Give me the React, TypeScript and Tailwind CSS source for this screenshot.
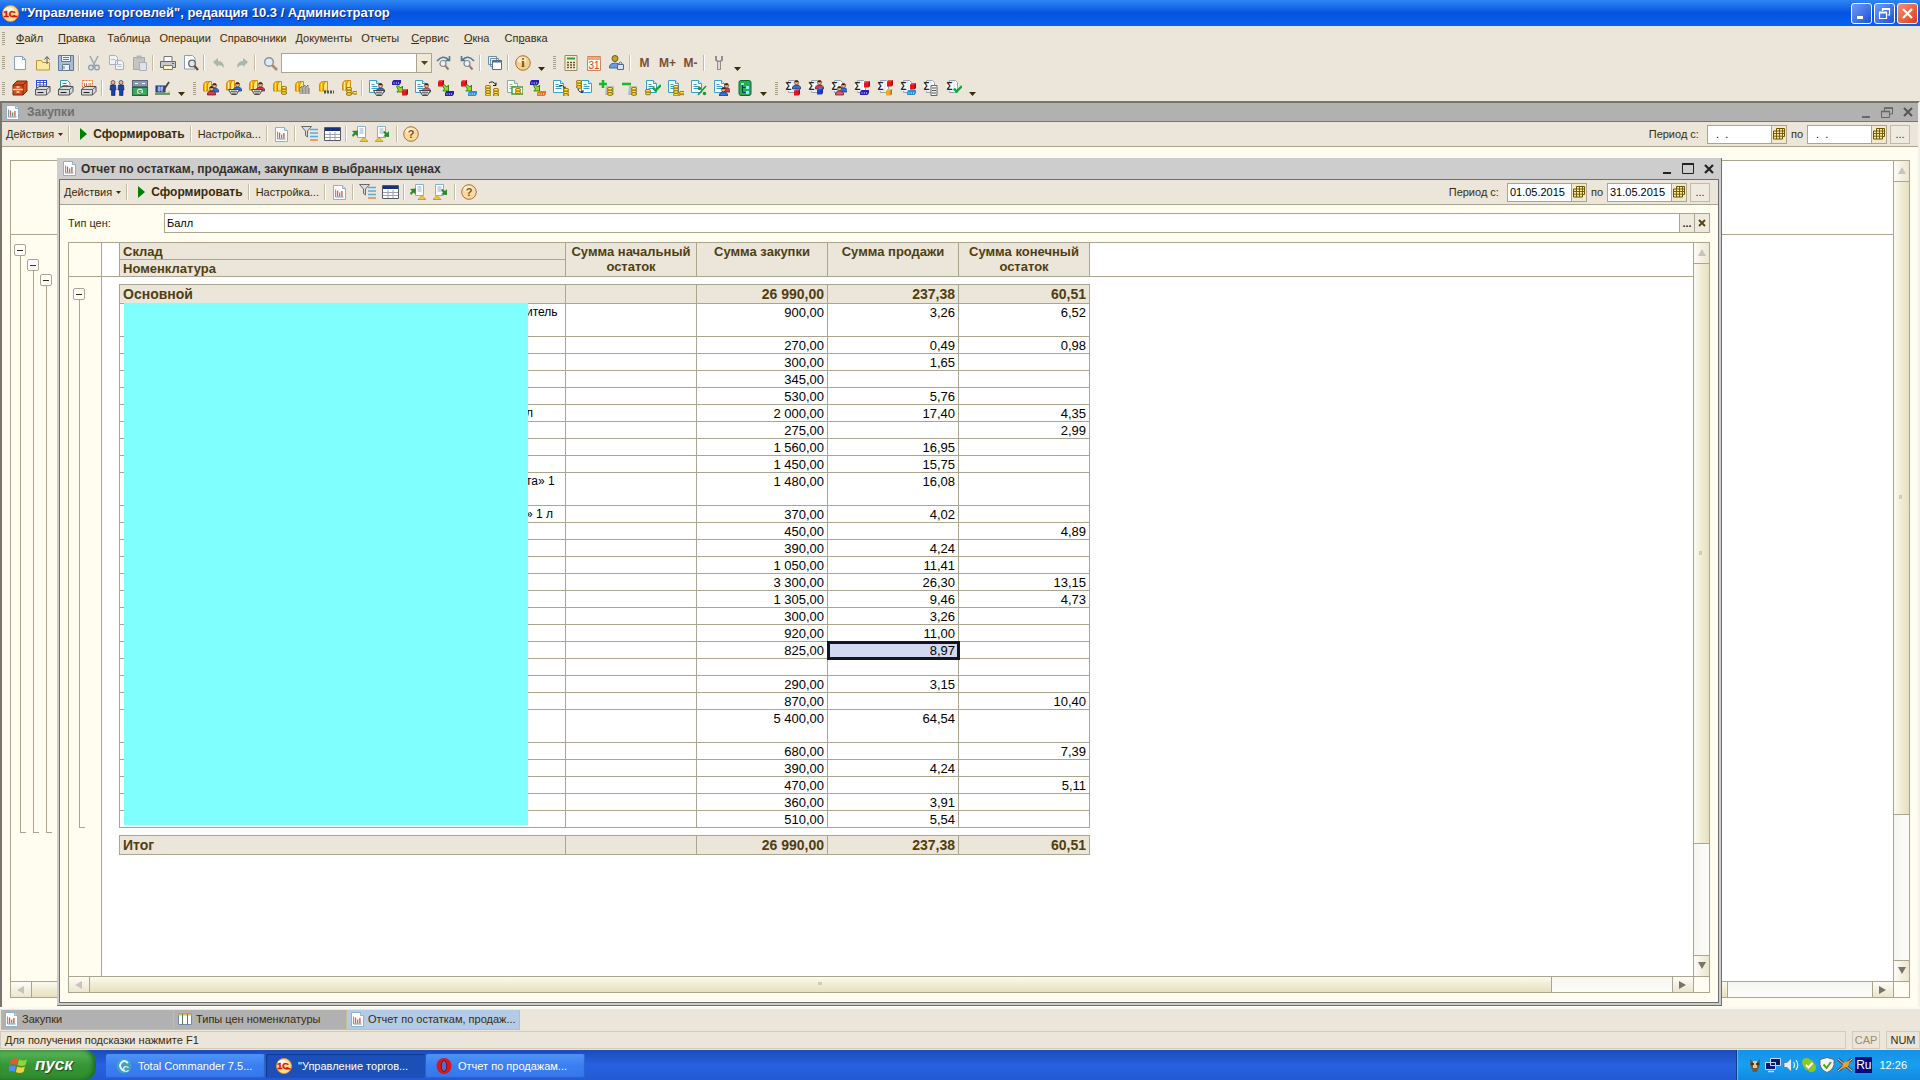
import type { ReactNode } from 'react'

const SHEET_FONT = "font-['Liberation_Sans',Arial,sans-serif]"

/* ── ICON PARTS ── */
type Part = { x?: number; y?: number; c?: string }
const at = (x = 0, y = 0) => `translate(${x} ${y})`

function Svg({ children, w = 16, h = 16 }: { children: ReactNode; w?: number; h?: number }) {
  return (
    <svg width={w} height={h} viewBox={`0 0 ${w} ${h}`} className="shrink-0" aria-hidden="true">
      {children}
    </svg>
  )
}

function Doc({ x, y, c = '#3aa0cc' }: Part) {
  return (
    <g transform={at(x, y)}>
      <path d="M.5.5h7l3 3v9h-10z" fill="#fff" stroke={c} />
      <path d="M7.5.5v3h3" fill="#dff0fa" stroke={c} />
      <path d="M2.500 4.500h3M2.500 6.500h6M2.500 8.500h6" stroke={c} />
    </g>
  )
}

function Coins({ x, y, n = 3 }: Part & { n?: number }) {
  return (
    <g transform={at(x, y)}>
      {Array.from({ length: n }, (_, i) => (
        <g key={i}>
          <rect x=".5" y={(n - 1 - i) * 2.6 + 0.5} width="5" height="2.6" rx="1.2" fill="#f8d020" stroke="#8a6400" strokeWidth=".9" />
          <path d={`M2 ${(n - 1 - i) * 2.6 + 1.4}h2`} stroke="#fff39a" strokeWidth=".8" />
        </g>
      ))}
    </g>
  )
}

function Person({ x, y, c = '#2f6fe0' }: Part) {
  return (
    <g transform={at(x, y)}>
      <path d="M.5 9V7l2-2h4l2 2v2z" fill={c} stroke="#20285a" strokeWidth=".7" />
      <circle cx="4.500" cy="2.600" r="2.100" fill="#f6b98a" stroke="#5a2a10" strokeWidth=".6" />
      <path d="M2.500 2.200a2 2 0 0 1 4 0z" fill="#4a2410" />
    </g>
  )
}

function Basket({ x, y }: Part) {
  return (
    <g transform={at(x, y)}>
      <path d="M.5.500h11l-3 5h-5z" fill="#fff" stroke="#333" strokeWidth=".9" />
      <path d="M2.500 2.500h7M4 4.300h4M4 .5v4M6 .5v5M8 .5v4" stroke="#555" strokeWidth=".7" />
    </g>
  )
}

function Cube({ x, y, c = '#e8141c' }: Part) {
  return (
    <g transform={at(x, y)}>
      <path d="M0 1.500L1.500 0H6v5L4.500 6.500H0z" fill={c} />
      <path d="M4.500 1.500V6.500L6 5V0z" fill="#000" opacity=".3" />
      <path d="M0 1.500L1.500 0H6L4.500 1.500z" fill="#fff" opacity=".25" />
    </g>
  )
}

function Shelf({ x, y, c = '#2a1fb8' }: Part) {
  return (
    <g transform={at(x, y)}>
      <path d="M0 2L1.500 0H9v3L7.500 5H0z" fill={c} />
      <path d="M1.500 3h1M3.800 3h1M6 3h1" stroke="#fff" strokeWidth="1.100" />
    </g>
  )
}

function GreenArrow({ x, y }: Part) {
  return <path transform={at(x, y)} d="M.5 1.500l1.500-1 3 2.500L6.500 1v6H.8l1.700-1.800z" fill="#8fdc20" stroke="#2b6a08" strokeWidth=".8" />
}

function Gold({ x, y }: Part) {
  return (
    <g transform={at(x, y)}>
      <path d="M.5 10V5q0-4.500 4-4.500h3q-3 1-3 4.500v5z" fill="#ffb400" stroke="#d08000" strokeWidth=".9" />
      <path d="M4.500 10V5q0-3.500 2.500-4.500h1.500V10z" fill="#ffe678" stroke="#d08000" strokeWidth=".9" />
      <path d="M2.500 2v8" stroke="#fff0a0" strokeWidth=".9" />
    </g>
  )
}

function Sheet({ x, y }: Part) {
  return (
    <g transform={at(x, y)}>
      <path d="M3.500.5h6l2 2v10h-8z" fill="#fff" stroke="#9aa4ae" />
      <rect x="0" y="2" width="8" height="9" fill="#fff" stroke="#c4c8cc" strokeWidth=".6" />
      <text x=".6" y="10.200" fontSize="10" fontWeight="700" fill="#222" fontFamily="Liberation Sans">Σ</text>
    </g>
  )
}

const Tick = ({ x, y }: Part) => (
  <path transform={at(x, y)} d="M1 3.500l2.500 3L9 1" fill="none" stroke="#12a53a" strokeWidth="2.400" />
)

const Printer = ({ x, y }: Part) => (
  <g transform={at(x, y)}>
    <path d="M.5 4.500L4 1.500h11v5l-3.500 3.500H.5z" fill="#d8dade" stroke="#444" strokeWidth=".9" />
    <path d="M.5 4.500h11L15 1.500M11.500 4.500V10" fill="none" stroke="#444" strokeWidth=".8" />
    <path d="M2.500 7.500h6" stroke="#222" />
  </g>
)

const ReportIcon = () => (
  <Svg w={13} h={15}>
    <path d="M.5.5h9l3 3v11h-12z" fill="#fff" stroke="#8fb0cc" />
    <path d="M9.500.5v3h3" fill="#cfe0f0" stroke="#8fb0cc" />
    <path d="M2.500 4.500v7.500h8" fill="none" stroke="#7a9aba" />
    <path d="M4.500 5.500v6" stroke="#d85a4a" strokeWidth="1.400" />
    <path d="M6.700 7.500v4" stroke="#4a9a5a" strokeWidth="1.200" />
    <path d="M8.900 6v5.500" stroke="#d85a4a" strokeWidth="1.400" />
  </Svg>
)

const CalendarGrid = () => (
  <Svg w={12} h={12}>
    <path d="M3.500.5h8v8h-2v2.500h-9V3h3z" fill="#f7e9a0" stroke="#6b5200" />
    <path d="M.5 5.500h11M.5 8.200h9M3.500 3v8M6.500.5v10.500M9.500.5v8M3.500 3h8" stroke="#6b5200" strokeWidth=".9" />
  </Svg>
)

const Logo1C = ({ size = 17 }: { size?: number }) => (
  <svg width={size} height={size} viewBox="0 0 17 17" className="shrink-0" aria-hidden="true">
    <circle cx="8.500" cy="8.500" r="8" fill="#fde08a" stroke="#f08a3a" />
    <ellipse cx="7" cy="5" rx="5" ry="3" fill="#fffbe8" />
    <text x="1.400" y="12" fontSize="9.500" fontWeight="700" fill="#d8140c" stroke="#d8140c" strokeWidth=".4" fontFamily="Liberation Sans">1С</text>
    <path d="M10 11.500h5.500" stroke="#d8140c" strokeWidth="1.600" />
  </svg>
)

/* ── SMALL CONTROLS ── */
const Grip = () => (
  <span className="mx-[2px] flex w-1 shrink-0 flex-col gap-px">
    {[0, 1, 2, 3, 4, 5, 6].map(i => <span key={i} className="h-px w-[3px] bg-[#a79f8a]" />)}
  </span>
)

const Sep = () => <span className="mr-[2px] ml-px h-4 w-[2px] shrink-0 border-l border-[#c3baa4] bg-white" />

const More = () => (
  <button aria-label="Еще" className="mr-1 ml-px flex h-4 w-3 shrink-0 items-end justify-center">
    <Svg w={7} h={4}><path d="M0 0h7L3.500 4z" fill="#3a2c08" /></Svg>
  </button>
)

function Tool({ label, children }: { label: string; children: ReactNode }) {
  return (
    <button aria-label={label} title={label} className="flex h-5 w-[23px] shrink-0 items-center justify-center">
      {children}
    </button>
  )
}

/* ── DATA ── */
const menu = [
  ['', 'Ф', 'айл'], ['', 'П', 'равка'], ['', '', 'Таблица'], ['', '', 'Операции'], ['', '', 'Справочники'],
  ['', '', 'Документы'], ['', '', 'Отчеты'], ['', 'С', 'ервис'], ['', 'О', 'кна'], ['Сп', 'р', 'авка'],
]

const printing: [string, ReactNode][] = [
  ['Картотека', <g key="i"><path d="M1 5l4-4h10v10l-4 4H1z" fill="#d4501c" stroke="#7a2408" /><path d="M1 5h10v10M11 5l4-4" fill="none" stroke="#7a2408" /><path d="M1 9.500h10M4.500 7h3M4.500 12h3" stroke="#fbd9b0" strokeWidth="1.300" /></g>],
  ['Печать реестра', <g key="i"><rect x="1.500" y=".5" width="10" height="7" fill="#fff" stroke="#2a4fd0" /><path d="M1.500 2.500h10M1.500 5h10M5 .5v7M8.500 .5v7" stroke="#2a4fd0" strokeWidth=".9" /><Printer y={5} /></g>],
  ['Печать документа', <g key="i"><path d="M2.500.5h7l2.500 2.500v4h-9.500z" fill="#fff" stroke="#2aa0a8" /><path d="M4.500 3.500h4M4.500 5.500h6" stroke="#2aa0a8" /><Printer y={5} /></g>],
  ['Печать ценников', <g key="i"><rect x="1.500" y=".5" width="10" height="7" fill="#fff" stroke="#f07020" strokeDasharray="2 1" /><path d="M3.500 3v3M5.500 3v3M8 3v3M9.800 3v3" stroke="#f07020" /><Printer y={5} /></g>],
]

const partners: [string, ReactNode][] = [
  ['Контрагенты', <g key="i" fill="#1c3fa8" stroke="#0a1a60" strokeWidth=".6"><circle cx="4" cy="2.500" r="2" fill="#f2b080" /><path d="M1.500 5h5l.5 5H6v5.500H2.500V10H1z" /><circle cx="12" cy="2.500" r="2" fill="#f2b080" /><path d="M9.500 5h5l.5 5h-1v5.500h-3.500V10H9z" /></g>],
  ['Касса', <g key="i"><rect x=".5" y=".5" width="15" height="6" fill="#8a98b0" stroke="#5a6478" /><path d="M3 3.500h3M10 3.500h3" stroke="#fff" /><rect x=".5" y="7.500" width="15" height="8" fill="#3aa860" stroke="#1a6a38" /><circle cx="8" cy="11.500" r="3" fill="#d8f4d8" /><text x="5.800" y="14.500" fontSize="8" fill="#1a6a38" fontFamily="Liberation Sans">$</text></g>],
  ['Учетная запись', <g key="i"><rect x="1" y="6" width="9" height="6" fill="#3a60c0" stroke="#1a2a60" /><path d="M3 8h5M3 10h5M4 6v6M7 6v6" stroke="#cfe0ff" strokeWidth=".8" /><path d="M0 14h15" stroke="#3a8a2a" strokeWidth="1.500" /><path d="M8 11l6-9" stroke="#444" strokeWidth="1.800" /><path d="M11 13l4-2v2z" fill="#b8c070" /></g>],
]

const sales: [string, ReactNode][] = [
  ['Клиенты', <g key="i"><Gold y={1} /><Person x={7} y={3} /><Person x={4} y={6} c="#e8343c" /></g>],
  ['Заказы покупателей', <g key="i"><Gold /><Person x={7} y={2} /><Basket x={2} y={9} /></g>],
  ['Заказы поставщикам', <g key="i"><Gold /><Person x={7} y={2} c="#e8343c" /><Basket x={2} y={9} /></g>],
  ['Цены', <g key="i"><Gold x={1} y={1} /><Coins x={9} y={6} /></g>],
  ['Остатки', <g key="i"><Gold y={1} /><path d="M5 14V8l2-2v8M8 14V7l2-2v9M11 14V7l2-2v9M14 14V8" fill="#e8e8ea" stroke="#777" /></g>],
  ['Склад', <g key="i"><Gold x={1} y={1} /><path d="M6 12h10" stroke="#555" strokeWidth="3" strokeDasharray="2 1" /></g>],
  ['Оплата', <g key="i"><Gold x={1} /><Coins x={5} y={7} /><Coins x={11} y={11} n={1} /></g>],
]

const docs: [string, ReactNode][] = [
  ['Заказ покупателя', <g key="i"><Doc /><Person x={7} y={3} /><Basket x={4} y={10} /></g>],
  ['Реализация', <g key="i"><Shelf /><GreenArrow x={4} y={5} /><Cube x={10} y={9} /></g>],
  ['Заказ поставщику', <g key="i"><Doc /><Person x={7} y={3} c="#f06068" /><Basket x={4} y={10} /></g>],
  ['Поступление', <g key="i"><Cube /><GreenArrow x={4} y={4} /><Shelf x={7} y={11} /></g>],
  ['Перемещение', <g key="i"><Cube /><GreenArrow x={4} y={4} /><Shelf x={7} y={11} c="#2a90e0" /></g>],
  ['Перемещение денег', <g key="i"><Coins x={1} y={5} n={4} /><Coins x={9} y={8} /><path d="M5 3q4-3 7 2M12 5.500V2.500M12 5.500H9" fill="none" stroke="#222" /></g>],
  ['Приходный ордер', <g key="i"><Doc c="#8ab098" /><rect x="5" y="7" width="11" height="7" fill="#fff" stroke="#3a9a2a" strokeWidth="1.400" /><Coins x={8} y={8} n={2} /></g>],
  ['Расход со склада', <g key="i"><Shelf /><GreenArrow x={3} y={4} /><Shelf x={7} y={11} c="#e07828" /></g>],
  ['Платежное поручение', <g key="i"><Doc /><path d="M6 6q4-2 6 3M12 9.500V6.500" fill="none" stroke="#222" /><Coins x={10} y={8} /></g>],
  ['Входящий платеж', <g key="i"><Doc x={5} /><Coins x={0} y={0} /><path d="M2 9q1 4 5 3M7 12H5M7 12V10" fill="none" stroke="#222" /></g>],
  ['Приход денег', <g key="i"><path d="M7 6h8v9H6z" fill="#b8bcc0" /><path d="M4 0v8M0 4h8" stroke="#18b828" strokeWidth="2.600" /><Coins x={8} y={7} /></g>],
  ['Расход денег', <g key="i"><path d="M7 6h8v9H6z" fill="#b8bcc0" /><path d="M0 4h9" stroke="#18b828" strokeWidth="2.600" /><Coins x={9} y={7} /></g>],
  ['Проверка', <g key="i"><Doc x={1} /><Tick x={7} y={4} /><Coins x={0} y={9} n={2} /></g>],
  ['Счет', <g key="i"><Doc /><Coins x={5} y={5} n={4} /><Coins x={11} y={11} n={2} /></g>],
  ['Скидки', <g key="i"><Doc /><path d="M7 15l8-9" stroke="#18963a" strokeWidth="1.500" /><circle cx="8.500" cy="8.500" r="1.700" fill="#18963a" /><circle cx="13.500" cy="13.500" r="1.700" fill="#18963a" /></g>],
  ['Взаиморасчеты', <g key="i"><Doc /><Person x={8} y={3} c="#e8343c" /><Person x={5} y={7} /></g>],
  ['Структура', <g key="i"><rect x="2" y=".5" width="12" height="15" rx="2" fill="#22b050" stroke="#0c6a2c" /><path d="M5.500 4v8.500h3M5.500 7.500h3" fill="none" stroke="#0a3a60" /><path d="M9 6h3v3H9zM9 11h3v3H9zM4 3h3v2H4z" fill="#9fe0ff" /></g>],
]

const reports: [string, ReactNode][] = [
  ['Продажи', <g key="i"><Sheet /><Person x={7} y={0} /><Cube x={9} y={9} /></g>],
  ['Закупки', <g key="i"><Sheet /><Person x={7} y={0} c="#e8343c" /><Cube x={9} y={8} c="#1c3fd0" /></g>],
  ['Взаиморасчеты', <g key="i"><Sheet /><Person x={8} y={3} /><Person x={4} y={6} c="#f05058" /></g>],
  ['Товары на складах', <g key="i"><Sheet /><Cube x={10} y={1} /><Shelf x={6} y={10} /></g>],
  ['Товары в рознице', <g key="i"><Sheet /><Cube x={10} y={0} /><Cube x={9} y={9} c="#f0a820" /></g>],
  ['Товары в резерве', <g key="i"><Sheet /><Cube x={10} y={3} /><Shelf x={7} y={10} c="#2a90e0" /></g>],
  ['Ведомость', <g key="i"><Sheet /><path d="M8 5.500h6v10H8z" fill="#f4f4f4" stroke="#666" /><path d="M9 8h4M9 10.500h4M9 13h4" stroke="#555" /></g>],
  ['Анализ', <g key="i"><Sheet /><Tick x={7} y={5} /></g>],
]

type Row = { name?: string; buy?: string; sell?: string; end?: string; tall?: boolean; active?: boolean }
const rows: Row[] = [
  { name: 'итель', buy: '900,00', sell: '3,26', end: '6,52', tall: true },
  { buy: '270,00', sell: '0,49', end: '0,98' },
  { buy: '300,00', sell: '1,65' },
  { buy: '345,00' },
  { buy: '530,00', sell: '5,76' },
  { name: 'л', buy: '2 000,00', sell: '17,40', end: '4,35' },
  { buy: '275,00', end: '2,99' },
  { buy: '1 560,00', sell: '16,95' },
  { buy: '1 450,00', sell: '15,75' },
  { name: 'та» 1', buy: '1 480,00', sell: '16,08', tall: true },
  { name: '» 1 л', buy: '370,00', sell: '4,02' },
  { buy: '450,00', end: '4,89' },
  { buy: '390,00', sell: '4,24' },
  { buy: '1 050,00', sell: '11,41' },
  { buy: '3 300,00', sell: '26,30', end: '13,15' },
  { buy: '1 305,00', sell: '9,46', end: '4,73' },
  { buy: '300,00', sell: '3,26' },
  { buy: '920,00', sell: '11,00' },
  { buy: '825,00', sell: '8,97', active: true },
  {},
  { buy: '290,00', sell: '3,15' },
  { buy: '870,00', end: '10,40' },
  { buy: '5 400,00', sell: '64,54', tall: true },
  { buy: '680,00', end: '7,39' },
  { buy: '390,00', sell: '4,24' },
  { buy: '470,00', end: '5,11' },
  { buy: '360,00', sell: '3,91' },
  { buy: '510,00', sell: '5,54' },
]

/* ── SCROLLBARS ── */
const arrows: Record<string, string> = {
  up: 'M4 0l4 7H0z', down: 'M0 0h8L4 7z', left: 'M7 0v8L0 4z', right: 'M0 0l7 4-7 4z',
}

function ScrollButton({ dir, dim }: { dir: string; dim?: boolean }) {
  const vertical = dir === 'up' || dir === 'down'
  return (
    <button
      aria-label={dir}
      className={`flex shrink-0 items-center justify-center border-[#aaa58e] ${vertical
        ? 'h-[21px] w-[15px] bg-linear-to-r from-[#fdfcf6] to-[#ebe6cf]'
        : 'h-[15px] w-[21px] bg-linear-to-b from-[#fdfcf6] to-[#ebe6cf]'} ${dir === 'up' ? 'border-b' : ''} ${dir === 'down' ? 'border-t' : ''} ${dir === 'left' ? 'border-r' : ''} ${dir === 'right' ? 'border-l' : ''}`}
    >
      <Svg w={8} h={8}><path d={arrows[dir]} fill={dim ? '#c6c4bb' : '#77746a'} /></Svg>
    </button>
  )
}

function VScroll({ size }: { size: number }) {
  return (
    <div className="flex w-4 shrink-0 flex-col border-l border-[#aaa58e]">
      <ScrollButton dir="up" dim />
      <div className="min-h-0 flex-1 bg-linear-to-r from-[#f6f5f0] to-[#fcfcfa]">
        <div
          className="flex items-center justify-center border-b border-[#aaa58e] bg-linear-to-r from-[#fbfaf1] via-[#f0ecd4] to-[#e6e0bf]"
          style={{ height: `${size}%` }}
        >
          <Svg w={5} h={5}><path d="M0 1h3M0 3h3" stroke="#b3ab88" /></Svg>
        </div>
      </div>
      <ScrollButton dir="down" />
    </div>
  )
}

function HScroll({ size }: { size: number }) {
  return (
    <div className="flex h-4 shrink-0 border-t border-[#aaa58e]">
      <ScrollButton dir="left" dim />
      <div className="min-w-0 flex-1 bg-linear-to-b from-[#f6f5f0] to-[#fcfcfa]">
        <div
          className="flex h-full items-center justify-center border-r border-[#aaa58e] bg-linear-to-b from-[#fbfaf1] via-[#f0ecd4] to-[#e6e0bf]"
          style={{ width: `${size}%` }}
        >
          <Svg w={5} h={5}><path d="M1 0v3M3 0v3" stroke="#b3ab88" /></Svg>
        </div>
      </div>
      <ScrollButton dir="right" />
      <span className="w-4 shrink-0 border-l border-[#aaa58e] bg-[#fffdf3]" />
    </div>
  )
}

/* ── REPORT COMMAND BAR ── */
function DateField({ id, value }: { id: string; value: string }) {
  return (
    <span className="flex h-[19px] border border-[#aaa58e]">
      <input id={id} defaultValue={value} className="w-[63px] bg-white px-[2px] text-black outline-none" />
      <button aria-label="Календарь" className="flex w-[15px] items-center justify-center border-l border-[#aaa58e] bg-[#efe9d4]">
        <CalendarGrid />
      </button>
    </span>
  )
}

function CommandBar({ id, from, to }: { id: string; from: string; to: string }) {
  return (
    <div className="flex h-[25px] shrink-0 items-center border-b border-[#aaa58e] bg-[#ebe5da] pr-2 pl-1">
      <button className="flex h-5 items-center gap-1 pr-1">
        Действия
        <Svg w={5} h={3}><path d="M0 0h5L2.500 3z" fill="#3a2c08" /></Svg>
      </button>
      <Sep />
      <button className="ml-2 flex h-5 items-center gap-[6px] pr-1 text-[12px] font-bold">
        <Svg w={7} h={12}><path d="M0 0l7 6-7 6z" fill="#008000" /></Svg>
        Сформировать
      </button>
      <Sep />
      <button className="h-5 px-1">Настройка...</button>
      <Sep />
      <Tool label="Новый отчет"><ReportIcon /></Tool>
      <Sep />
      <Tool label="Отбор">
        <Svg w={17}>
          <path d="M.5.5h10L6.500 5v6l-2-1.500V5z" fill="#d8dce0" stroke="#6a6a6a" />
          <path d="M9 3.500h8M9 7h8M9 10.500h8" stroke="#5aaad8" strokeWidth="1.600" />
          <path d="M9 14h8" stroke="#e88a4a" strokeWidth="1.600" />
        </Svg>
      </Tool>
      <Tool label="Таблица">
        <Svg w={17}>
          <path d="M.5 1.500h16v13H.5z" fill="#fff" stroke="#555a66" />
          <path d="M1 3.500h15" stroke="#1c2f7a" strokeWidth="3" />
          <path d="M1 8.500h15M1 11.500h15M6 6v8M11 6v8" stroke="#9aa0ac" />
        </Svg>
      </Tool>
      <Sep />
      <Tool label="Загрузить">
        <Svg>
          <path d="M5.500.5h8v11h-8z" fill="#fff" stroke="#8ab0c8" />
          <path d="M7.500 3h4M7.500 5h4M7.500 7h4" stroke="#8ab0c8" />
          <path d="M8 15.500l4-4 4 4z" fill="#f0c838" stroke="#b08a10" strokeWidth=".7" />
          <path d="M0 5l6-.5-.5 6-2-2L1 11l-1-2 2-2z" fill="#2a8a28" />
        </Svg>
      </Tool>
      <Tool label="Сохранить">
        <Svg>
          <path d="M2.500.5h8v11h-8z" fill="#fff" stroke="#8ab0c8" />
          <path d="M4.500 3h4M4.500 5h4M4.500 7h4" stroke="#8ab0c8" />
          <path d="M0 15.500l4-4 4 4z" fill="#f0c838" stroke="#b08a10" strokeWidth=".7" />
          <path d="M14 11l-6-.500 2-2-2-2.500 1.500-1 2.500 2 2-2z" fill="#2a8a28" />
        </Svg>
      </Tool>
      <Sep />
      <Tool label="Справка">
        <Svg>
          <circle cx="8" cy="8" r="7.300" fill="#fbd9a0" stroke="#a8743a" />
          <ellipse cx="7" cy="5" rx="4.500" ry="3" fill="#fff3d8" opacity=".8" />
          <text x="4.800" y="12" fontSize="11" fontWeight="700" fill="#7a5226" fontFamily="Liberation Sans">?</text>
        </Svg>
      </Tool>
      <div className="ml-auto flex items-center">
        <label htmlFor={`${id}-from`} className="mr-2">Период с:</label>
        <DateField id={`${id}-from`} value={from} />
        <label htmlFor={`${id}-to`} className="mx-1">по</label>
        <DateField id={`${id}-to`} value={to} />
        <button aria-label="Выбрать период" className="ml-[3px] h-[19px] w-5 border border-[#c3baa4] bg-[#efeadf] leading-none">...</button>
      </div>
    </div>
  )
}

/* ── GROUPING TREE ── */
function Minus() {
  return (
    <button aria-label="Свернуть" className="flex h-[12px] w-[12px] shrink-0 items-center justify-center rounded-[2px] border border-[#aaa58e] bg-white">
      <span className="h-px w-[6px] bg-[#3a2c08]" />
    </button>
  )
}

function Branch({ className }: { className: string }) {
  return (
    <div className={`flex flex-col items-center ${className}`}>
      <Minus />
      <span className="ml-[5px] w-[6px] flex-1 border-b border-l border-[#aaa58e]" />
    </div>
  )
}

const Cols = () => (
  <colgroup>
    <col />
    <col className="w-[131px]" />
    <col className="w-[131px]" />
    <col className="w-[131px]" />
    <col className="w-[131px]" />
  </colgroup>
)

const edge = 'border-r border-b border-[#aaa58e] px-[3px] pb-0 align-top leading-[15px]'
const cell = `${edge} pt-px`
const sumCell = `${edge} pt-[2px] text-right`

function SumRow({ title }: { title: string }) {
  return (
    <tr className="h-[19px] bg-[#ebe5da] text-[14px] font-bold text-[#4f3f10]">
      <th scope="row" className={`${edge} pt-[2px] text-left`}>{title}</th>
      <td className={edge} />
      <td className={sumCell}>26 990,00</td>
      <td className={sumCell}>237,38</td>
      <td className={sumCell}>60,51</td>
    </tr>
  )
}

function ReportWindow() {
  return (
    <section className="absolute top-[57px] right-[198px] bottom-px left-[57px] flex flex-col border-r border-b border-[#6e6e6e] bg-[#cdcdcd] pr-[2px] pb-[2px] pl-[2px]">
      <header className="flex h-[21px] shrink-0 items-center gap-[5px] pr-[5px] pl-1 text-[#33302c]">
        <ReportIcon />
        <h2 className="text-[12px] font-bold">Отчет по остаткам, продажам, закупкам в выбранных ценах</h2>
        <div className="ml-auto flex items-center gap-[10px]">
          <button aria-label="Свернуть"><Svg w={9} h={11}><path d="M0 10h8" stroke="#222" strokeWidth="2" /></Svg></button>
          <button aria-label="Развернуть"><Svg w={12} h={11}><path d="M.5 1h11v9.500H.5z" fill="none" stroke="#222" /><path d="M0 1h12" stroke="#222" strokeWidth="2" /></Svg></button>
          <button aria-label="Закрыть"><Svg w={10} h={10}><path d="M1 1l8 8M9 1L1 9" stroke="#222" strokeWidth="2.200" /></Svg></button>
        </div>
      </header>
      <div className="flex min-h-0 flex-1 flex-col border border-[#6e6e6e] bg-[#fffcf0]">
        <CommandBar id="report" from="01.05.2015" to="31.05.2015" />
        <div className="flex min-h-0 flex-1 flex-col px-2 pt-2 pb-[9px]">
          <div className="flex items-center">
            <label htmlFor="price-type" className="w-24">Тип цен:</label>
            <span className="flex h-5 flex-1 border border-[#aaa58e]">
              <input id="price-type" defaultValue="Балл" className="min-w-0 flex-1 bg-white px-[2px] text-black outline-none" />
              <button aria-label="Выбрать" className="w-[15px] border-l border-[#aaa58e] bg-[#efeadf] leading-none font-bold">...</button>
              <button aria-label="Очистить" className="flex w-[15px] items-center justify-center border-l border-[#aaa58e] bg-[#efeadf]">
                <Svg w={8} h={8}><path d="M1 1l6 6M7 1L1 7" stroke="#55430c" strokeWidth="1.800" /></Svg>
              </button>
            </span>
          </div>

          <div className="mt-[9px] flex min-h-0 flex-1 flex-col border border-[#aaa58e] bg-white">
            <div className="flex min-h-0 flex-1">
              <div className="flex min-w-0 flex-1 flex-col overflow-hidden text-[13px] text-black">
                <div className="flex h-[34px] shrink-0 border-b border-[#aaa58e]">
                  <div className="w-[33px] shrink-0 border-r border-[#aaa58e] bg-[#fffcf0]" />
                  <table className="ml-[17px] w-[971px] table-fixed border-separate border-spacing-0 border-l border-[#aaa58e] bg-[#ebe5da] text-[#4f3f10]">
                    <Cols />
                    <thead>
                      <tr className="h-[17px]">
                        <th className={`${cell} text-left`}>Склад</th>
                        <th rowSpan={2} className={cell}>Сумма начальный остаток</th>
                        <th rowSpan={2} className={cell}>Сумма закупки</th>
                        <th rowSpan={2} className={cell}>Сумма продажи</th>
                        <th rowSpan={2} className={cell}>Сумма конечный остаток</th>
                      </tr>
                      <tr className="h-[17px]">
                        <th className={`${cell} text-left`}>Номенклатура</th>
                      </tr>
                    </thead>
                  </table>
                </div>
                <div className="flex min-h-0 flex-1">
                  <div className="w-[33px] shrink-0 border-r border-[#aaa58e] bg-[#fffcf0] pt-[11px] pl-1">
                    <Branch className="h-[540px] w-3" />
                  </div>
                  <div className="relative mt-[7px] ml-[17px] w-[971px] self-start">
                    <table className="w-full table-fixed border-separate border-spacing-0 border-t border-l border-[#aaa58e]">
                      <Cols />
                      <tbody>
                        <SumRow title="Основной" />
                        {rows.map((r, i) => (
                          <tr key={i} className={r.tall ? 'h-[33px]' : 'h-[17px]'}>
                            <td className="border-r border-b border-[#aaa58e] pt-px pb-0 pl-[406px] align-top text-[12px] leading-[15px] whitespace-nowrap">{r.name}</td>
                            <td className={cell} />
                            <td className={`${cell} text-right`}>{r.buy}</td>
                            <td className={`${cell} text-right ${r.active ? 'bg-[#d3daf0] outline-[3px] -outline-offset-2 outline-[#14161f] outline-solid' : ''}`}>{r.sell}</td>
                            <td className={`${cell} text-right`}>{r.end}</td>
                          </tr>
                        ))}
                      </tbody>
                    </table>
                    <table className="mt-[7px] w-full table-fixed border-separate border-spacing-0 border-t border-l border-[#aaa58e]">
                      <Cols />
                      <tbody><SumRow title="Итог" /></tbody>
                    </table>
                    <div className="absolute top-[19px] left-[5px] h-[522px] w-[404px] bg-[#80ffff]" />
                  </div>
                </div>
              </div>
              <VScroll size={84} />
            </div>
            <HScroll size={92.4} />
          </div>
        </div>
      </div>
    </section>
  )
}

function PurchasesWindow() {
  return (
    <section className="flex min-h-0 flex-1 flex-col border-t-2 border-r-2 border-l-2 border-t-[#77756c] border-r-[#f4f1ea] border-l-[#77756c] bg-[#fffcf0]">
      <header className="flex h-[19px] shrink-0 items-center gap-2 border-b border-[#77756c] bg-[#b1b1b1] pr-[5px] pl-1 text-[#6f6f6f]">
        <ReportIcon />
        <h2 className="text-[12px] font-bold">Закупки</h2>
        <div className="ml-auto flex items-center gap-[10px]">
          <button aria-label="Свернуть"><Svg w={9} h={11}><path d="M0 10h8" stroke="#666" strokeWidth="2" /></Svg></button>
          <button aria-label="Восстановить"><Svg w={12} h={11}><path d="M3.500 4V1h8v6h-3M.5 4.500h8v6h-8z" fill="none" stroke="#666" /><path d="M3 1h9M0 4.500h9" stroke="#666" strokeWidth="1.600" /></Svg></button>
          <button aria-label="Закрыть"><Svg w={10} h={10}><path d="M1 1l8 8M9 1L1 9" stroke="#555" strokeWidth="2" /></Svg></button>
        </div>
      </header>
      <CommandBar id="purchases" from="  .  ." to="  .  ." />
      <div className="mx-2 mt-[13px] mb-[9px] flex min-h-0 flex-1 flex-col border border-[#aaa58e] bg-white">
        <div className="flex min-h-0 flex-1">
          <div className="flex min-w-0 flex-1 flex-col">
            <div className="flex h-[74px] shrink-0 border-b border-[#aaa58e]"><span className="w-16 bg-[#fffcf0]" /></div>
            <div className="flex h-[598px] w-16 shrink-0 items-end gap-px bg-[#fffcf0] pl-[3px]">
              <Branch className="h-[589px] w-3" />
              <Branch className="h-[574px] w-3" />
              <Branch className="h-[559px] w-3" />
            </div>
            <div className="w-16 flex-1 bg-[#fffcf0]" />
          </div>
          <VScroll size={81.3} />
        </div>
        <HScroll size={92.2} />
      </div>
    </section>
  )
}

/* ── MAIN TOOLBARS ── */
const IconGroup = ({ items }: { items: [string, ReactNode][] }) => (
  <>{items.map(([label, art], i) => <Tool key={i} label={label}><Svg>{art}</Svg></Tool>)}</>
)

const Lens = ({ x = 0, y = 0 }: Part) => (
  <g transform={at(x, y)}>
    <circle cx="5" cy="5" r="4.300" fill="#dcecf8" stroke="#8a8f98" strokeWidth="1.400" />
    <path d="M8 8l5 5" stroke="#b08a78" strokeWidth="2.600" />
  </g>
)

function StandardBar() {
  return (
    <div className="flex h-[25px] shrink-0 items-center">
      <Grip />
      <Tool label="Новый"><Svg><path d="M2.500 1.500h8l3 3v10h-11z" fill="#fbfdff" stroke="#8aa0b8" /><path d="M10.500 1.500v3h3" fill="none" stroke="#8aa0b8" /></Svg></Tool>
      <Tool label="Открыть"><Svg><path d="M1.500 5.500h5l1 2h7v7.500h-13z" fill="#fbe9a0" stroke="#b8963a" /><path d="M12 9V2M9.500 4.500L12 1.500l2.500 3" fill="none" stroke="#5a5a5a" /></Svg></Tool>
      <Tool label="Сохранить"><Svg><path d="M.5.5h15v15H.5z" fill="#a8bcd4" stroke="#5f7a98" /><path d="M3.500.5h9v6h-9zM4.500 9.500h7v6h-7z" fill="#eef4fa" stroke="#5f7a98" /><path d="M5 2.500h6M5 4.500h6M6 11v3" stroke="#5f7a98" /></Svg></Tool>
      <Sep />
      <Tool label="Вырезать"><Svg><path d="M4 1l5 10M12 1L7 11" stroke="#a0a8b4" strokeWidth="1.600" /><circle cx="5" cy="12.500" r="2.300" fill="none" stroke="#8fa0b8" strokeWidth="1.400" /><circle cx="11" cy="12.500" r="2.300" fill="none" stroke="#8fa0b8" strokeWidth="1.400" /></Svg></Tool>
      <Tool label="Копировать"><Svg><path d="M.5.5h6l2 2v7h-8zM6.500 5.500h6l2 2v7h-8z" fill="#f0f2f6" stroke="#a8b0c0" /><path d="M2 4.500h4M8.500 9.500h4M8.500 11.500h4" stroke="#b8c0cc" /></Svg></Tool>
      <Tool label="Вставить"><Svg><path d="M1.500 2.500h11v12h-11z" fill="#c4c4c0" stroke="#a8a8a4" /><path d="M4.500.5h5v3h-5z" fill="#b0b4bc" /><path d="M7.500 7.500h7v8h-7z" fill="#dfe2e6" stroke="#a8b0c0" /></Svg></Tool>
      <Sep />
      <Tool label="Печать"><Svg><path d="M4 1.500h8v5H4z" fill="#fff" stroke="#777" /><path d="M.5 6.500h15v6H.5z" fill="#c8c8cc" stroke="#666" /><path d="M3.500 10.500h9v4h-9z" fill="#fdf4c8" stroke="#777" /><path d="M12 8.500h2" stroke="#d03030" /></Svg></Tool>
      <Tool label="Просмотр"><Svg><path d="M1.500.5h8l2.500 2.500v11h-10.500z" fill="#fff" stroke="#8aa0b8" /><circle cx="9" cy="8.500" r="3.300" fill="#dfe8f0" stroke="#666" strokeWidth="1.300" /><path d="M11.500 11l3.500 4" stroke="#6a4a3a" strokeWidth="2.200" /></Svg></Tool>
      <Sep />
      <Tool label="Отменить"><Svg><path d="M2 7l5-4v3q6 0 6 7-2-3-6-3v2z" fill="#a9b8a9" /></Svg></Tool>
      <Tool label="Повторить"><Svg><path d="M14 7L9 3v3q-6 0-6 7 2-3 6-3v2z" fill="#a9b8a9" /></Svg></Tool>
      <Sep />
      <Tool label="Найти"><Svg><Lens x={2} y={2} /></Svg></Tool>
      <span className="flex h-5 w-[151px] shrink-0 border border-[#aaa58e]">
        <input aria-label="Поиск" className="min-w-0 flex-1 bg-white px-[2px] outline-none" />
        <button aria-label="Список" className="flex w-[15px] items-center justify-center border-l border-[#aaa58e] bg-[#efe9d8]">
          <Svg w={7} h={4}><path d="M0 0h7L3.500 4z" fill="#55430c" /></Svg>
        </button>
      </span>
      <Tool label="Найти следующий"><Svg><path d="M1 6q6-7 12-1M13.500 1v4.500H9.500" fill="none" stroke="#4a7a9a" strokeWidth="1.600" /><circle cx="7" cy="8.500" r="3" fill="#e8f0f8" stroke="#888" strokeWidth="1.200" /><path d="M9.500 11l3 3.500" stroke="#9a7a6a" strokeWidth="2" /></Svg></Tool>
      <Tool label="Найти предыдущий"><Svg><path d="M15 6q-6-7-12-1M2.500 1v4.500H6.500" fill="none" stroke="#4a7a9a" strokeWidth="1.600" /><circle cx="8" cy="8.500" r="3" fill="#e8f0f8" stroke="#888" strokeWidth="1.200" /><path d="M10.500 11l3 3.500" stroke="#9a7a6a" strokeWidth="2" /></Svg></Tool>
      <Sep />
      <Tool label="Окна"><Svg><path d="M1.500 1.500h8v8h-8zM3.500 3.500h8v8h-8z" fill="#eef4fa" stroke="#6f8cab" /><path d="M5.500 5.500h9v9h-9z" fill="#fff" stroke="#4f6f92" /><path d="M5.500 6.500h9" stroke="#4f6f92" strokeWidth="2" /></Svg></Tool>
      <Sep />
      <Tool label="Справка">
        <Svg><circle cx="8" cy="8" r="7.300" fill="#f6cf8a" stroke="#a8743a" /><ellipse cx="7" cy="5" rx="4.500" ry="3" fill="#fff3d8" opacity=".8" /><text x="6.200" y="12.200" fontSize="12" fontWeight="700" fill="#6a4a1c" fontFamily="Liberation Serif">i</text></Svg>
      </Tool>
      <More />
      <Grip />
      <Tool label="Калькулятор"><Svg><path d="M2 .5h12v15H2z" fill="#f4efd8" stroke="#9a8a62" /><path d="M4 3.500h8" stroke="#3a9a3a" strokeWidth="2" /><path d="M4 7.500h2M7 7.500h2M10 7.500h2M4 10h2M7 10h2M10 10h2M4 12.500h2M7 12.500h2" stroke="#6b5426" strokeWidth="1.400" /><path d="M10 12.500h2" stroke="#d03030" strokeWidth="1.400" /></Svg></Tool>
      <Tool label="Календарь"><Svg><path d="M1.500 1.500h13v14h-13z" fill="#fffaf0" stroke="#c88a5a" /><path d="M1.500 3.500h13" stroke="#f0a880" strokeWidth="3" /><text x="2.400" y="13.500" fontSize="10" fill="#d84020" fontFamily="Liberation Sans">31</text></Svg></Tool>
      <Tool label="Пользователи"><Svg><circle cx="6" cy="3.500" r="3" fill="#c8a030" stroke="#6a5a20" /><path d="M.5 13v-2q1-3 5.500-3t5 3v2z" fill="#6f9cd8" stroke="#4a6a98" /><path d="M10 10V8q1.500-2 3 0v2" fill="none" stroke="#4a6a98" /><path d="M8.500 9.500h6v5h-6z" fill="#d8e4f4" stroke="#4a6a98" /></Svg></Tool>
      <Sep />
      {['M', 'M+', 'M-'].map(m => <button key={m} className="w-[23px] shrink-0 text-[12px] font-bold text-[#7a4f33]">{m}</button>)}
      <Sep />
      <Tool label="Настройка"><Svg><path d="M5 1v4l3 2 3-2V1" fill="none" stroke="#8f8f8f" strokeWidth="2" /><path d="M8 7v8" stroke="#8f8f8f" strokeWidth="4" /><path d="M8 7v7" stroke="#e4e4e4" strokeWidth="1.800" /></Svg></Tool>
      <More />
    </div>
  )
}

/* ── TASKBAR ── */
function TaskButton({ label, icon, active }: { label: string; icon: ReactNode; active?: boolean }) {
  return (
    <button className={`flex h-6 w-[159px] items-center gap-[6px] rounded-[2px] pl-[10px] whitespace-nowrap text-white ${active
      ? 'bg-[#1c50b8] shadow-[inset_1px_1px_1px_#123a8c]'
      : 'bg-linear-to-b from-[#4f92f8] via-[#3a7ff2] to-[#3577ea] shadow-[inset_-1px_-1px_1px_#2a62cc]'}`}>
      {icon}
      {label}
    </button>
  )
}

export default function App() {
  return (
    <div className={`flex h-screen min-h-[900px] flex-col overflow-hidden bg-[#ebe5da] text-[11px] leading-4 text-[#3a2c08] ${SHEET_FONT}`}>
      <header className="flex h-[26px] shrink-0 items-center gap-[2px] bg-linear-to-b from-[#2f86f4] via-[#0553dd] to-[#0562f4] px-[2px]">
        <Logo1C />
        <h1 className="text-[13px] font-bold text-white [text-shadow:1px_1px_0_#0a2a80]">"Управление торговлей", редакция 10.3 / Администратор</h1>
        <div className="ml-auto flex gap-[2px]">
          <button aria-label="Свернуть" className="flex h-[21px] w-[21px] items-center justify-center rounded-[3px] border border-white bg-linear-to-br from-[#6f9cf8] to-[#1c4fd8]"><Svg w={13} h={13}><path d="M2 10.500h6" stroke="#fff" strokeWidth="3" /></Svg></button>
          <button aria-label="Восстановить" className="flex h-[21px] w-[21px] items-center justify-center rounded-[3px] border border-white bg-linear-to-br from-[#6f9cf8] to-[#1c4fd8]"><Svg w={13} h={13}><path d="M4.500 4V2h7v6h-2M1.500 5.500h7v6h-7z" fill="none" stroke="#fff" strokeWidth="1.200" /><path d="M4 2h8M1 5.500h8" stroke="#fff" strokeWidth="2" /></Svg></button>
          <button aria-label="Закрыть" className="flex h-[21px] w-[21px] items-center justify-center rounded-[3px] border border-white bg-linear-to-br from-[#f09070] to-[#d83a10]"><Svg w={13} h={13}><path d="M2 2l9 9M11 2l-9 9" stroke="#fff" strokeWidth="2.200" /></Svg></button>
        </div>
      </header>

      <nav className="flex h-6 shrink-0 items-center">
        <Grip />
        <div className="flex gap-[9px] pl-[5px]">
          {menu.map(([before, key, rest]) => (
            <a key={rest} href="#" className={key ? 'px-[3px]' : ''}>{before}<span className="underline">{key}</span>{rest}</a>
          ))}
        </div>
      </nav>
      <StandardBar />
      <div className="flex h-[26px] shrink-0 items-center">
        <Grip />
        <IconGroup items={printing} />
        <Sep />
        <IconGroup items={partners} />
        <More />
        <Grip />
        <IconGroup items={sales} />
        <Sep />
        <IconGroup items={docs} />
        <More />
        <Grip />
        <IconGroup items={reports} />
        <More />
      </div>

      <main className="relative flex min-h-0 flex-1 flex-col">
        <PurchasesWindow />
        <ReportWindow />
      </main>

      <div className="flex h-[23px] shrink-0 items-center border-t-2 border-[#fbf9f4] pl-px">
        {['Закупки', 'Типы цен номенклатуры', 'Отчет по остаткам, продаж...'].map((t, i) => (
          <button key={t} className={`flex h-5 w-[173px] items-center gap-1 border-r border-b border-[#c8c08c] pl-1 whitespace-nowrap ${i === 2 ? 'bg-[#b3cbe6]' : 'bg-[#b1b1b1]'}`}>
            {i === 1
              ? <Svg w={14} h={14}><path d="M.5 1.500h13v11H.5z" fill="#fff" stroke="#7a8aa8" /><path d="M.5 2.500h13" stroke="#e8b848" strokeWidth="2" /><path d="M4.500 2v11M9.500 2v11" stroke="#4a8a5a" /></Svg>
              : <ReportIcon />}
            {t}
          </button>
        ))}
      </div>

      <footer className="flex h-5 shrink-0 items-center gap-[6px] pb-px">
        <span className="flex-1 border border-[#d2cabb] pl-1">Для получения подсказки нажмите F1</span>
        <span className="w-7 border border-[#d2cabb] text-center text-[#9a8d6c]">CAP</span>
        <span className="w-[34px] border border-[#d2cabb] text-center">NUM</span>
      </footer>

      <div className="flex h-[30px] shrink-0 items-stretch bg-linear-to-b from-[#1c4cb8] via-[#2761e0] to-[#2459d4]">
        <button className="flex w-24 items-center gap-[7px] rounded-r-xl bg-linear-to-b from-[#5cb85c] via-[#369636] to-[#2f8a2f] pl-[9px] shadow-[inset_-3px_0_4px_#1d6a22]">
          <Svg w={19} h={19}>
            <path d="M2 4q3-3 7-1L7.500 9q-4-2-7 0z" fill="#f0562a" />
            <path d="M10 3.500q4 2 8 0L16.500 9q-4 2-8 0z" fill="#8cd83a" />
            <path d="M0 10.500q4-2 7 0L5.500 16q-3-2-7 0z" fill="#4a8cf8" />
            <path d="M8.300 10.500q4 2 7.700 0L14.500 16q-4 2-7.700 0z" fill="#fbd030" />
          </Svg>
          <span className="text-[17px] font-bold text-white italic [text-shadow:1px_1px_1px_#1a4a1a]">пуск</span>
        </button>
        <div className="ml-[10px] flex flex-1 items-center gap-px pt-px">
          <TaskButton label="Total Commander 7.5..." icon={<Svg><circle cx="8" cy="8" r="7.500" fill="#3fa0c8" /><path d="M12 5q-4-4-7 0t3 8" fill="none" stroke="#e4f8ff" strokeWidth="2" /><text x="6.500" y="14" fontSize="9" fontWeight="700" fill="#dff5c8" fontFamily="Liberation Sans">C</text></Svg>} />
          <TaskButton active label={'"Управление торгов...'} icon={<Logo1C size={16} />} />
          <TaskButton label="Отчет по продажам..." icon={<Svg><ellipse cx="8" cy="8" rx="7.500" ry="8" fill="#d8181c" /><ellipse cx="8" cy="8" rx="2.800" ry="5.500" fill="#4a6fd8" stroke="#8a0a10" /></Svg>} />
        </div>
        <div className="flex items-center gap-[2px] border-l border-[#0e3a8c] bg-linear-to-b from-[#1490e8] via-[#18a0f0] to-[#1288e0] pr-[13px] pl-[10px] text-white shadow-[inset_1px_0_0_#4cc0ff]">
          <Svg><path d="M3 2l3 3h4l3-3v6l-3 7H6L3 8z" fill="#6a5a4a" /><path d="M6 4h4v7H6z" fill="#e8c87a" /><path d="M4 7h3M9 7h3" stroke="#222" strokeWidth="1.500" /></Svg>
          <Svg><path d="M5.500 1.500h10v7h-10zM.5 5.500h10v7H.5z" fill="#0a1a70" stroke="#c8d8ff" /><path d="M3 14.500h6" stroke="#c8d8ff" strokeWidth="1.500" /></Svg>
          <Svg><path d="M1 5.500h3L8.500 1v14L4 10.500H1z" fill="#e8ecf0" stroke="#5a6a7a" strokeWidth=".7" /><path d="M10.500 5q2 3 0 6M13 3q3.500 5 0 10" fill="none" stroke="#d8f4ff" strokeWidth="1.200" /></Svg>
          <Svg><circle cx="5.500" cy="5.500" r="4.500" fill="#8cc820" /><circle cx="10.500" cy="10.500" r="4.500" fill="#8cc820" /><circle cx="8" cy="8" r="5.500" fill="#8cc820" /><path d="M5 8l2.500 2.500L11.500 6" fill="none" stroke="#fff" strokeWidth="2" /></Svg>
          <Svg><path d="M8 .5l7 2v5q-1 5.500-7 8-6-2.500-7-8v-5z" fill="#f4f4f4" stroke="#666" /><path d="M4.500 7.500L7.500 11 12 5" fill="none" stroke="#5aa020" strokeWidth="2" /></Svg>
          <Svg><path d="M1 2l14 12M15 2L1 14" stroke="#555" strokeWidth="3" /><path d="M1 2l14 12M15 2L1 14" stroke="#d8d8d8" strokeWidth="1" /><path d="M4 12l3-7 6-1-2 5z" fill="#f0a020" /></Svg>
          <span className="bg-[#000c80] px-px text-[12px]">Ru</span>
          <span className="pl-[5px]">12:26</span>
        </div>
      </div>
    </div>
  )
}
